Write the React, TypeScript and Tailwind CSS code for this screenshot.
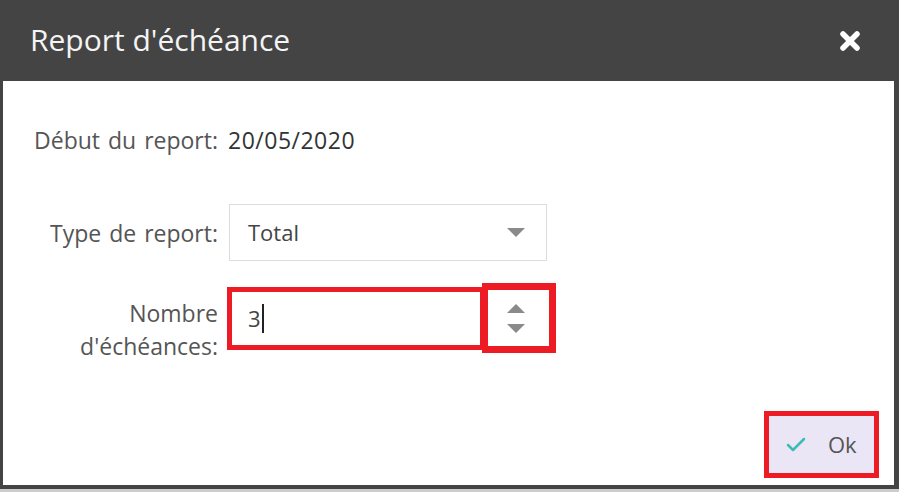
import { Check } from "lucide-react";

function CloseIcon() {
  return (
    <svg width="22" height="22" viewBox="0 0 22 22" className="block">
      <path d="M4 4 L18 18 M18 4 L4 18" stroke="#ffffff" strokeWidth="5.5" strokeLinecap="round" />
    </svg>
  );
}

function Caret({ up = false }: { up?: boolean }) {
  return (
    <svg width="18" height="9" viewBox="0 0 18 9" className="block">
      <path d={up ? "M0 9 L9 0 L18 9 Z" : "M0 0 L18 0 L9 9 Z"} fill="#8a8a8a" />
    </svg>
  );
}

export default function App() {
  return (
    <div
      className="w-[899px] h-[492px] bg-[#444444] overflow-hidden flex flex-col"
      style={{ fontFamily: '"Open Sans", "Liberation Sans", sans-serif' }}
    >
      <header className="h-[81px] shrink-0 flex items-center justify-between pl-[30px] pr-[38px]">
        <h1 className="text-[30px] leading-none text-[#f4f4f4] -mt-[1px]">Report d'échéance</h1>
        <CloseIcon />
      </header>

      <div className="flex-1 ml-[3px] mr-[5px] bg-white flex flex-col">
        <div className="pt-[44px] flex h-[74px]">
          <div className="w-[215px] text-right text-[23px] leading-[30px] text-[#555555] [word-spacing:2px]">Début du report:</div>
          <div className="ml-[10px] text-[23px] leading-[30px] text-[#333333] tracking-[0.5px]">20/05/2020</div>
        </div>

        <div className="mt-[49px] flex items-center">
          <div className="w-[215px] text-right text-[23px] leading-[30px] text-[#555555] [word-spacing:2px]">Type de report:</div>
          <div className="ml-[11px] w-[318px] h-[57px] border border-[#dcdcdc] flex items-center justify-between pl-[18px] pr-[21px]">
            <span className="text-[22px] text-[#444444]">Total</span>
            <Caret />
          </div>
        </div>

        <div className="mt-[22px] flex items-start">
          <div className="w-[215px] mt-[14px] text-right text-[23px] leading-[33px] text-[#555555]">
            Nombre
            <br />
            d'échéances:
          </div>
          <div className="ml-[9px] h-[70px] flex items-center">
            <div className="w-[258px] h-[63px] border-[5px] border-[#ed1c24] flex items-center pl-[16px]">
              <span className="text-[22px] text-[#444444]">3</span>
              <span className="w-[2px] h-[29px] bg-[#222222] ml-[1px]" />
            </div>
            <div className="-ml-[3px] w-[74px] h-[70px] border-[7px] border-l-[6px] border-[#ed1c24] flex flex-col items-center justify-center gap-[11px] pr-[6px]">
              <Caret up />
              <Caret />
            </div>
          </div>
        </div>

        <div className="flex-1" />
        <div className="flex justify-end pr-[15px] pb-[7px]">
          <button className="w-[115px] h-[67px] border-[5px] border-[#ed1c24] bg-[#ebe6f6] flex items-center pl-[15px] gap-[20px]">
            <Check size={24} strokeWidth={2.5} color="#3cbcb4" />
            <span className="text-[22px] text-[#555555]">Ok</span>
          </button>
        </div>
      </div>

      <div className="h-[4px] shrink-0" />
      <div className="h-[3px] shrink-0 bg-[#cdcdcd]" />
    </div>
  );
}
